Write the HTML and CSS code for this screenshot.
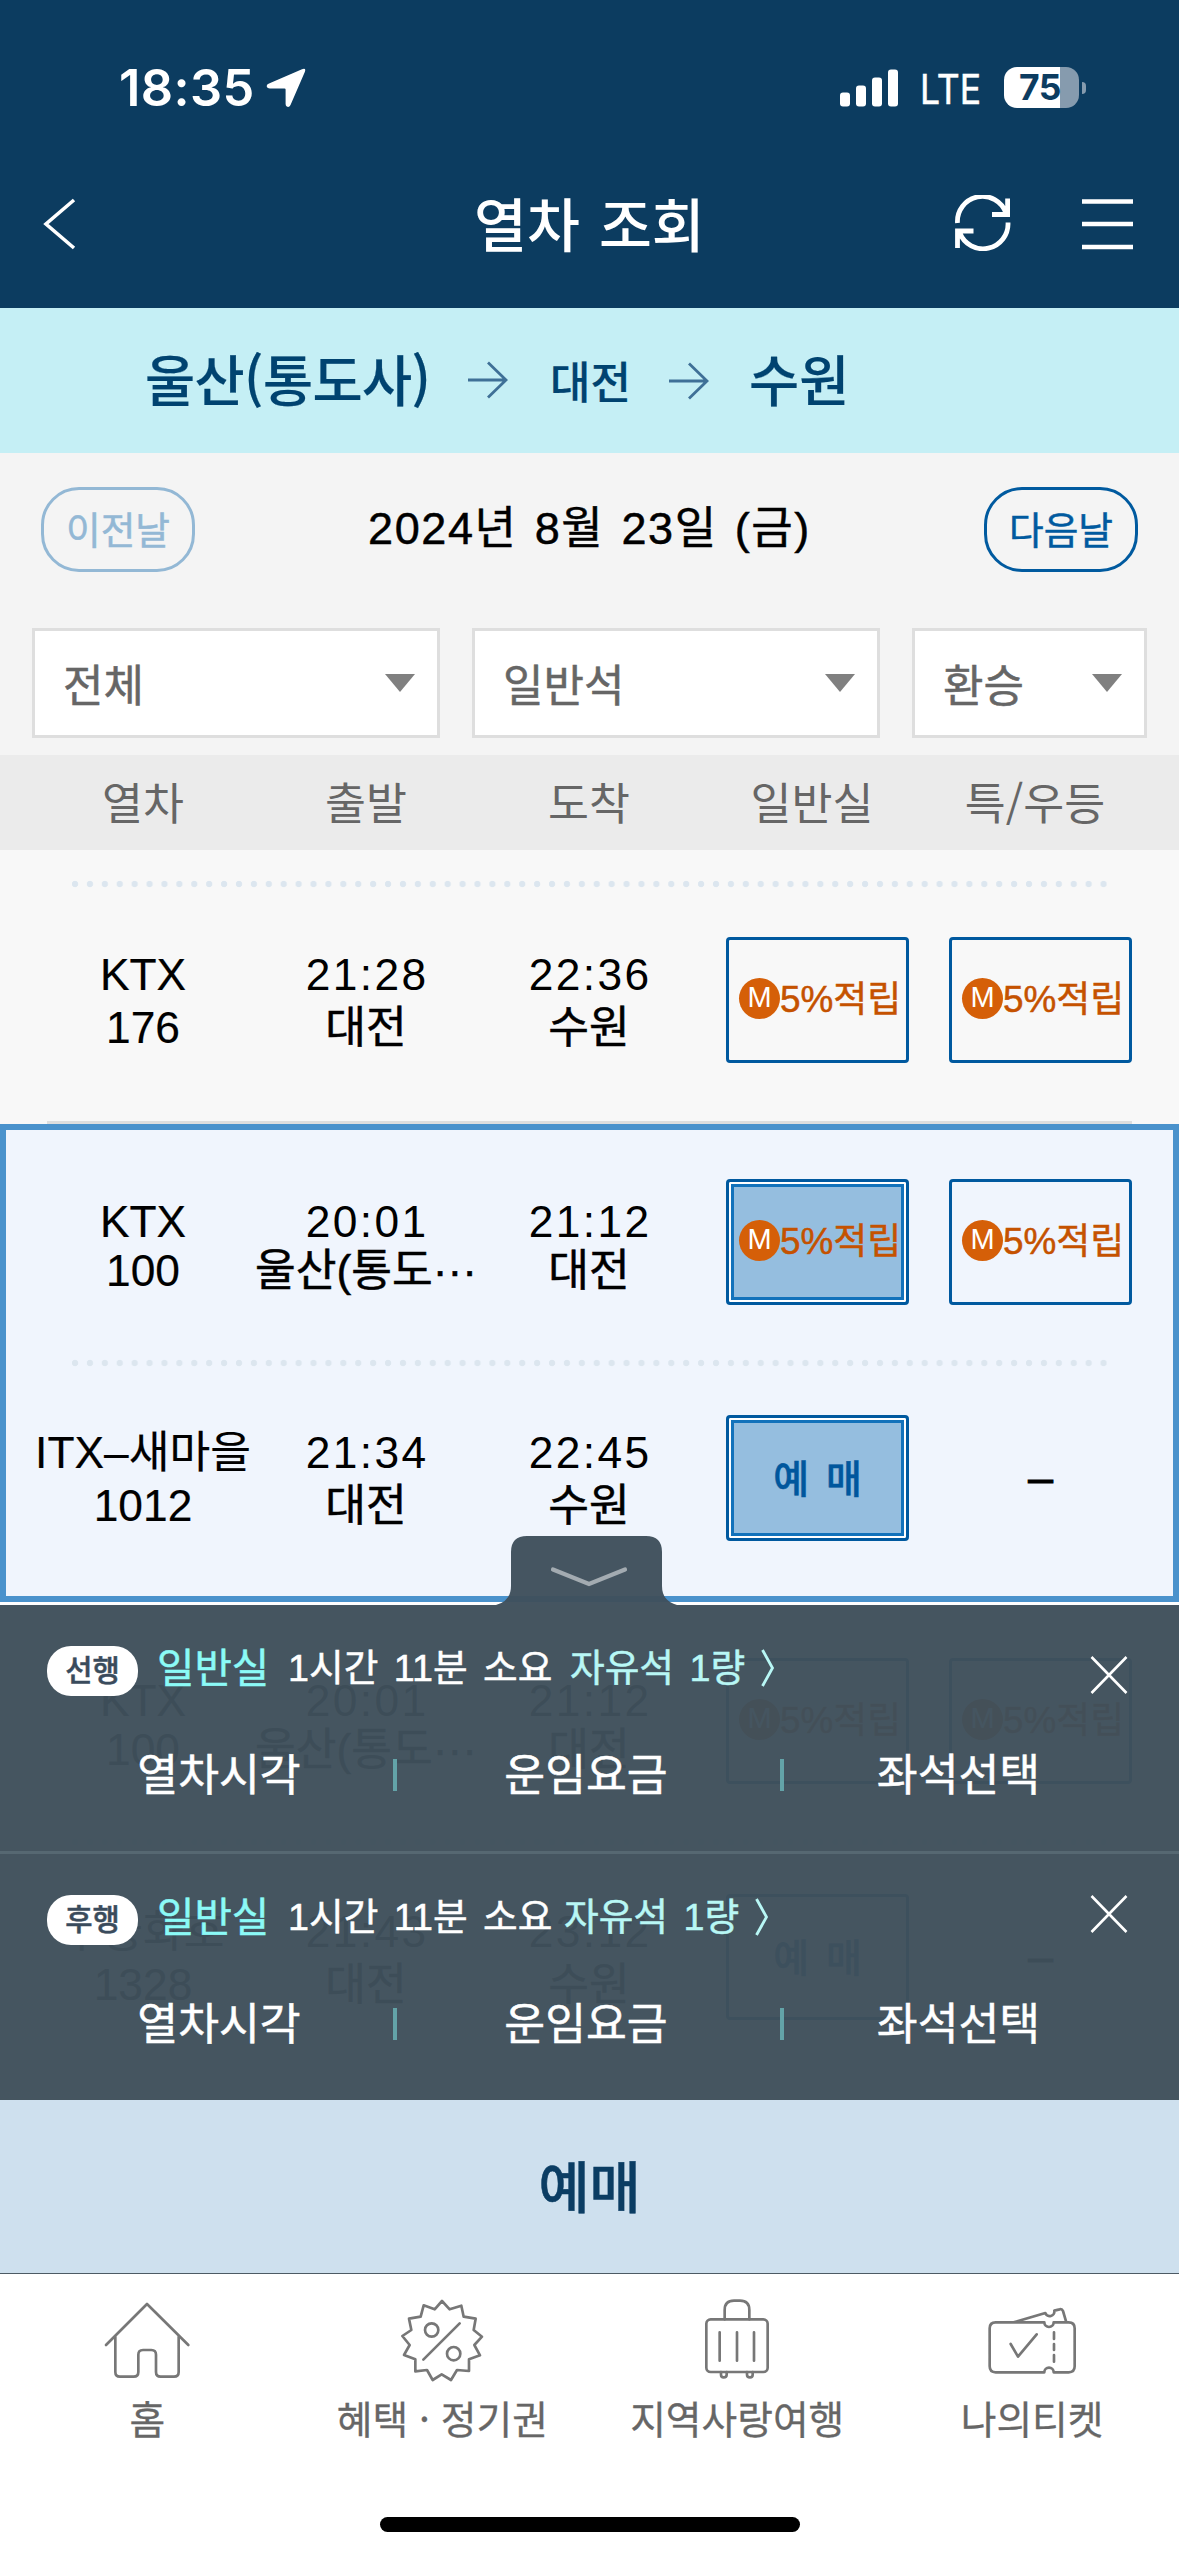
FILE: index.html
```html
<!DOCTYPE html>
<html lang="ko">
<head>
<meta charset="utf-8">
<title>열차 조회</title>
<link rel="stylesheet" href="styles.css">
</head>
<body>
<svg width="0" height="0" class="defs">
  <symbol id="arrow" viewBox="0 0 40 38">
    <path d="M0 19H38M20 1.5L38 19L20 36.5" fill="none" stroke="#3f7097" stroke-width="2.8"/>
  </symbol>
  <symbol id="close" viewBox="0 0 38 38">
    <path d="M1.5 1L36.5 37M36.5 1L1.5 37" fill="none" stroke="#fff" stroke-width="2.6"/>
  </symbol>
  <symbol id="more" viewBox="0 0 14 38">
    <path d="M1.5 1L11.5 19L1.5 37" fill="none" stroke="#b8f7f5" stroke-width="2.8"/>
  </symbol>
</svg>

<header class="header">
  <div class="status">
    <span class="time">18:35</span>
    <svg class="location" width="40" height="40" viewBox="0 0 40 40"><path d="M36 1.2Q40.5 -.4 38.8 4L24.5 37Q23 40 20.8 38.6Q19.6 37.8 19.6 36V21.5Q19.6 20.4 18.5 20.4H4Q.8 20.4 .7 18Q.7 16.6 3 15.6Z" fill="#fff"/></svg>
    <div class="status-right">
      <svg width="58" height="38" viewBox="0 0 58 38" fill="#fff"><rect y="23.500" width="10" height="14" rx="3"/><rect x="16" y="16.500" width="10" height="21" rx="3"/><rect x="32" y="8.500" width="10" height="29" rx="3"/><rect x="48" y=".5" width="10" height="37" rx="3"/></svg>
      <svg class="network" width="62" height="50" viewBox="0 0 62 50"><text x="1" y="40.500" class="carrier" textLength="61" lengthAdjust="spacingAndGlyphs">LTE</text></svg>
      <div class="battery"><span class="battery-level">75</span></div>
    </div>
  </div>
  <nav class="nav">
    <svg class="back" width="34" height="52" viewBox="0 0 34 52"><path d="M32 2L4 26L32 50" fill="none" stroke="#fff" stroke-width="3.6"/></svg>
    <h1 class="title">열차 조회</h1>
    <svg class="refresh" width="56" height="56" viewBox="0 0 56 56" fill="none" stroke="#fff" stroke-width="4.800"><path d="M2.500 28A25 25 0 0 1 51 18M37 19.500H52.600V3.500M53 27.500A25 25 0 0 1 4.800 38M18.500 36H2.500V53"/></svg>
    <svg class="menu" width="51" height="52" viewBox="0 0 51 52" stroke="#fff" stroke-width="4.600"><path d="M0 3.500H51M0 26H51M0 49H51"/></svg>
  </nav>
</header>

<section class="route">
  <span class="station">울산(통도사)</span>
  <svg class="arrow first" width="40" height="38"><use href="#arrow"/></svg>
  <span class="station via">대전</span>
  <svg class="arrow second" width="40" height="38"><use href="#arrow"/></svg>
  <span class="station">수원</span>
</section>

<section class="search">
  <div class="date-row">
    <span class="pill disabled">이전날</span>
    <span class="date">2024년 8월 23일 (금)</span>
    <span class="pill">다음날</span>
  </div>
  <div class="filters">
    <div class="select">전체<i></i></div>
    <div class="select">일반석<i></i></div>
    <div class="select">환승<i></i></div>
  </div>
</section>

<div class="grid columns">
  <span>열차</span><span>출발</span><span>도착</span><span>일반실</span><span>특/우등</span>
</div>

<main class="list">
  <section class="group leading">
    <div class="dots"></div>
    <div class="grid row">
      <div>KTX<br>176</div>
      <div><span class="clock">21:28</span><br>대전</div>
      <div><span class="clock">22:36</span><br>수원</div>
      <button class="seat"><span class="mileage">M</span>5%적립</button>
      <button class="seat"><span class="mileage">M</span>5%적립</button>
    </div>
    <div class="divider"></div>
  </section>

  <section class="group selected">
    <div class="grid row tight">
      <div>KTX<br>100</div>
      <div><span class="clock">20:01</span><br>울산(통도···</div>
      <div><span class="clock">21:12</span><br>대전</div>
      <button class="seat picked"><span class="mileage">M</span>5%적립</button>
      <button class="seat"><span class="mileage">M</span>5%적립</button>
    </div>
    <div class="dots"></div>
    <div class="grid row">
      <div>ITX–새마을<br>1012</div>
      <div><span class="clock">21:34</span><br>대전</div>
      <div><span class="clock">22:45</span><br>수원</div>
      <button class="seat book picked">예 매</button>
      <div class="none">–</div>
    </div>
  </section>

  <section class="group">
    <div class="grid row tight">
      <div>KTX<br>100</div>
      <div><span class="clock">20:01</span><br>울산(통도···</div>
      <div><span class="clock">21:12</span><br>대전</div>
      <button class="seat"><span class="mileage">M</span>5%적립</button>
      <button class="seat"><span class="mileage">M</span>5%적립</button>
    </div>
    <div class="dots"></div>
    <div class="grid row">
      <div>무궁화호<br>1328</div>
      <div><span class="clock">21:43</span><br>대전</div>
      <div><span class="clock">23:12</span><br>수원</div>
      <button class="seat book">예 매</button>
      <div class="none">–</div>
    </div>
  </section>

  <aside class="sheet">
    <svg class="handle" width="181" height="69" viewBox="0 0 181 69">
      <path d="M0 69Q15 65 15 50V16Q15 0 31 0H150Q166 0 166 16V50Q166 65 181 69Z" fill="#3f505c" fill-opacity=".97"/>
      <path d="M57 33.500L93 48L129 33.500" fill="none" stroke="#a3abb1" stroke-width="4.200" stroke-linecap="round"/>
    </svg>
    <div class="leg">
      <div class="leg-info">
        <span class="badge">선행</span>
        <span class="class">일반실</span>
        <span class="duration">1시간 11분 소요</span>
        <span class="free">자유석 1량</span>
        <svg width="14" height="38"><use href="#more"/></svg>
        <svg class="close" width="38" height="38"><use href="#close"/></svg>
      </div>
      <div class="actions"><span>열차시각</span><span>운임요금</span><span>좌석선택</span></div>
    </div>
    <div class="leg following">
      <div class="leg-info">
        <span class="badge">후행</span>
        <span class="class">일반실</span>
        <span class="duration">1시간 11분 소요</span>
        <span class="free">자유석 1량</span>
        <svg width="14" height="38"><use href="#more"/></svg>
        <svg class="close" width="38" height="38"><use href="#close"/></svg>
      </div>
      <div class="actions"><span>열차시각</span><span>운임요금</span><span>좌석선택</span></div>
    </div>
  </aside>
</main>

<div class="reserve">예매</div>

<footer class="tabs">
  <div class="tab">
    <svg viewBox="29 6 288 288"><path d="M50 165L173 42L297 165M78 140V246Q78 260 92 260H133Q147 260 147 246V194Q147 180 161 180H186Q200 180 200 194V246Q200 260 214 260H254Q268 260 268 246V140"/></svg>
    <span>홈</span>
  </div>
  <div class="tab">
    <svg viewBox="911 6 288 288"><path d="M1055 33L1078 58L1113 47L1120 80L1156 86L1150 120L1175 140L1152 165L1169 196L1136 208V243L1100 240L1082 270L1054 253L1027 270L1010 240L975 244V208L941 195L958 165L936 138L963 120L956 86L991 80L1000 46L1033 58Z"/><circle cx="1024" cy="120" r="20"/><circle cx="1090" cy="191" r="20"/><path d="M1108 100L999 209"/></svg>
    <span>혜택 · 정기권</span>
  </div>
  <div class="tab">
    <svg viewBox="238 6 288 288"><rect x="290" y="88" width="184" height="158" rx="13"/><path d="M345 88V60Q345 32 373 32H391Q419 32 419 60V88M330 127V212M382 127V212M433 127V212M334 246V254Q334 262 342 262Q351 262 351 254V246M412 246V254Q412 262 421 262Q429 262 429 254V246"/></svg>
    <span>지역사랑여행</span>
  </div>
  <div class="tab">
    <svg viewBox="1119 6 288 288"><path d="M1154 97H1300A14 14 0 0 0 1328 97H1373Q1391 97 1391 115V229Q1391 247 1373 247H1328A14 14 0 0 0 1300 247H1154Q1136 247 1136 229V115Q1136 97 1154 97ZM1208 97L1303 69A14 14 0 0 0 1330 62L1346 58Q1353 56 1356 63L1366 97M1199 162L1221 200L1277 133M1329 127V147M1329 162V180M1329 195V215"/></svg>
    <span>나의티켓</span>
  </div>
  <div class="home-indicator"></div>
</footer>
</body>
</html>
```
FILE: styles.css
```css
* { box-sizing: border-box; }

body {
  margin: 0;
  width: 1179px;
  height: 2556px;
  display: flex;
  flex-direction: column;
  background: #fff;
  color: #000;
  font-family: "Noto Sans CJK KR", sans-serif;
  -webkit-text-stroke: .5px currentColor;
  white-space: nowrap;
  overflow: hidden;
}

svg { display: block; flex: none; }
.defs { position: absolute; }

/* header */
.header { height: 308px; background: #0c3c60; color: #fff; flex: none; }
.status {
  height: 140px;
  padding: 35px 93px 0 119px;
  display: flex;
  align-items: center;
  font-family: Inter, sans-serif;
  -webkit-text-stroke: 0;
}
.time { width: 147px; font-size: 50.500px; font-weight: 600; line-height: 105px; letter-spacing: .4px; }
.location { margin-top: 1px; }
.status-right { margin-left: auto; display: flex; align-items: center; gap: 24px; }
.network { margin: 0 -1px 0 -3px; overflow: visible; }
.carrier { font: 40.500px Inter, sans-serif; fill: #fff; stroke: #fff; stroke-width: .5px; }
.battery { display: flex; align-items: center; width: 82px; height: 41px; }
.battery-level {
  width: 75px;
  height: 41px;
  flex: none;
  border-radius: 13px;
  background: linear-gradient(90deg, #fff 56px, #869bae 56px);
  color: #0c3c60;
  font-size: 35.500px;
  font-weight: 700;
  line-height: 41px;
  letter-spacing: -.5px;
  padding-left: 15px;
}
.battery::after {
  content: "";
  width: 4px;
  height: 12px;
  margin-left: 3px;
  border-radius: 0 4px 4px 0;
  background: #869bae;
}
.nav { height: 168px; display: flex; align-items: center; padding: 0 46px 0 42px; }
.title {
  margin: 0 0 5px;
  flex: 1;
  padding-left: 398px;
  font-size: 57.500px;
  font-weight: 500;
  line-height: 80px;
  word-spacing: 3px;
  -webkit-text-stroke: 0;
}
.refresh { margin-right: 71px; margin-bottom: 2px; }

/* route */
.route {
  height: 145px;
  flex: none;
  padding: 0 0 2px 145px;
  display: flex;
  align-items: center;
  background: #c5eff5;
  color: #004370;
  -webkit-text-stroke: .2px currentColor;
}
.station { font-size: 54.500px; font-weight: 500; line-height: 80px; padding-bottom: 3px; }
.station:first-child { width: 323px; letter-spacing: -.6px; }
.via { font-size: 44px; width: 119px; padding-bottom: 0; }
.arrow.first { margin-right: 42px; }
.arrow.second { margin-right: 40px; margin-top: 3px; }

/* date and filters */
.search { height: 302px; flex: none; background: #f4f4f4; }
.date-row { display: flex; justify-content: space-between; padding: 34px 41px 0; }
.pill {
  width: 154px;
  height: 85px;
  border: 3px solid #005a9f;
  border-radius: 38px;
  color: #005a9f;
  font-size: 37.700px;
  line-height: 75px;
  text-align: center;
}
.pill.disabled { border-color: #93b8d5; color: #93b8d5; }
.date, .row, .duration, .free { font-family: "Liberation Sans", "Noto Sans CJK KR", sans-serif; }
.date { height: 84px; padding-top: 2px; font-size: 45px; line-height: 80px; letter-spacing: 1.600px; word-spacing: 3px; }
.filters {
  display: grid;
  grid-template-columns: 408px 408px 235px;
  gap: 32px;
  padding: 56px 32px 0;
}
.select {
  height: 110px;
  padding: 0 22px 0 28px;
  display: flex;
  align-items: center;
  justify-content: space-between;
  border: 3px solid #dedede;
  background: #fff;
  color: #666;
  font-size: 44px;
  line-height: 101px;
}
.select i { border: 15px solid transparent; border-top: 18px solid #808080; border-bottom: 0; }

/* train table */
.grid { display: grid; grid-template-columns: repeat(5, 223px); padding-left: 31.500px; text-align: center; }
.columns {
  height: 95px;
  flex: none;
  background: #ebebeb;
  color: #666;
  font-size: 44.500px;
  line-height: 91px;
  -webkit-text-stroke: 0;
}
.list { position: relative; height: 1250px; flex: none; overflow: hidden; background: #f8f8f8; }
.group { height: 478px; padding: 55px 0 61px; margin-bottom: 1px; }
.group.leading { height: 274px; padding: 30px 0 0; margin: 0; }
.group.selected { background: #f0f5fd; box-shadow: inset 0 0 0 6px #4a92cc, 0 4px 0 #fff; }
.dots {
  height: 8px;
  margin: 54px 72px 48px;
  background: radial-gradient(circle at 3px 4px, #dce6ef 2.800px, transparent 3.600px) 0 0 / 14.910px 8px repeat-x;
}
.leading .dots { margin: 0 72px 49px; }
.row { height: 126px; font-size: 44.300px; line-height: 53.500px; align-items: center; }
.row > div { padding-top: 2px; }
.row > div:first-child { -webkit-text-stroke-width: .2px; }
.row.tight { line-height: 49px; }
.row.tight > div { padding-top: 7px; }
.clock { letter-spacing: 2.400px; margin-right: -2.400px; -webkit-text-stroke-width: 0; }
.divider { height: 3px; margin: 58px 47px 0; background: #dedede; }
.seat {
  width: 183px;
  height: 126px;
  margin: 0 0 0 25.500px;
  padding: 0 0 0 10px;
  display: flex;
  align-items: center;
  border: 3px solid #00599f;
  border-radius: 4px;
  background: transparent;
  color: #c55200;
  font: 36.900px/60px "Liberation Sans", "Noto Sans CJK KR", sans-serif;
  white-space: nowrap;
}
.seat.picked {
  background: #95bedf;
  box-shadow: inset 0 0 0 2px #fff, inset 0 0 0 5px #1272bb;
}
.seat.book {
  padding: 3px 0 0;
  justify-content: center;
  color: #00579d;
  font-size: 39px;
  font-weight: 500;
  word-spacing: 6px;
}
.mileage {
  width: 41px;
  height: 41px;
  margin-bottom: 3px;
  border-radius: 50%;
  background: #d55f08;
  color: #fff;
  font-size: 29px;
  line-height: 39px;
  text-align: center;
  -webkit-text-stroke: 0;
}
.row .none { margin-left: 25.500px; width: 183px; padding-top: 0; padding-bottom: 1px; -webkit-text-stroke-width: 1.200px; }

/* bottom sheet */
.sheet {
  position: absolute;
  left: 0;
  right: 0;
  bottom: 0;
  height: 495px;
  background: rgba(63, 80, 91, .97);
  color: #fff;
}
.handle { position: absolute; left: 496px; top: -69px; }
.leg { height: 246px; padding-top: 41px; }
.leg.following { height: 249px; border-top: 3px solid #566872; }
.leg-info { height: 50px; display: flex; align-items: center; padding: 0 51px 0 47px; font-size: 37.700px; line-height: 50px; }
.leg-info > svg { margin-bottom: 6px; }
.badge {
  width: 91px;
  height: 50px;
  margin-right: 19px;
  border-radius: 24px;
  background: #fff;
  color: #3a4b5c;
  font-size: 29.700px;
  font-weight: 500;
  line-height: 46px;
  text-align: center;
}
.class { width: 131px; color: #8bfaf7; font-size: 40.700px; margin-bottom: 10px; }
.duration { width: 282px; word-spacing: 5px; margin-bottom: 6px; }
.free { width: 191px; color: #b8f7f5; word-spacing: 5px; margin-bottom: 6px; }
.following .duration { width: 276px; }
.leg-info > .close { margin: 7px 0 0 auto; }
.following .leg-info > .close { margin: -13px 0 0 auto; }
.actions {
  display: grid;
  grid-template-columns: 353px 387px 349px;
  padding: 46px 46px 0 44px;
  font-size: 44.400px;
  line-height: 60px;
  text-align: center;
}
.actions span {
  background: linear-gradient(#63a3a8, #63a3a8) right 17px / 4px 32px no-repeat;
}
.actions span:nth-child(1) { padding-right: 3px; }
.actions span:nth-child(2) { padding-right: 9px; }
.actions span:last-child { background: none; }

/* reserve bar and tabs */
.reserve {
  height: 173px;
  flex: none;
  background: #cee0ee;
  color: #0b3d63;
  font-size: 55.500px;
  font-weight: 500;
  line-height: 169px;
  text-align: center;
}
.tabs {
  height: 283px;
  flex: none;
  display: grid;
  grid-template-columns: repeat(4, 294.900px);
  grid-template-rows: auto auto;
  align-content: start;
  border-top: 1px solid #4c5a64;
  padding-top: 18px;
  background: #fff;
  color: #666;
  -webkit-text-stroke: .3px currentColor;
}
.tab { display: flex; flex-direction: column; align-items: center; }
.tab svg { width: 96px; height: 96px; fill: none; stroke: #777; stroke-width: 8; stroke-linecap: round; stroke-linejoin: round; }
.tab span { margin-top: 9px; font-size: 38.800px; line-height: 40px; }
.home-indicator {
  grid-column: 1 / -1;
  justify-self: center;
  width: 420px;
  height: 15px;
  margin-top: 80px;
  border-radius: 8px;
  background: #000;
}
```
